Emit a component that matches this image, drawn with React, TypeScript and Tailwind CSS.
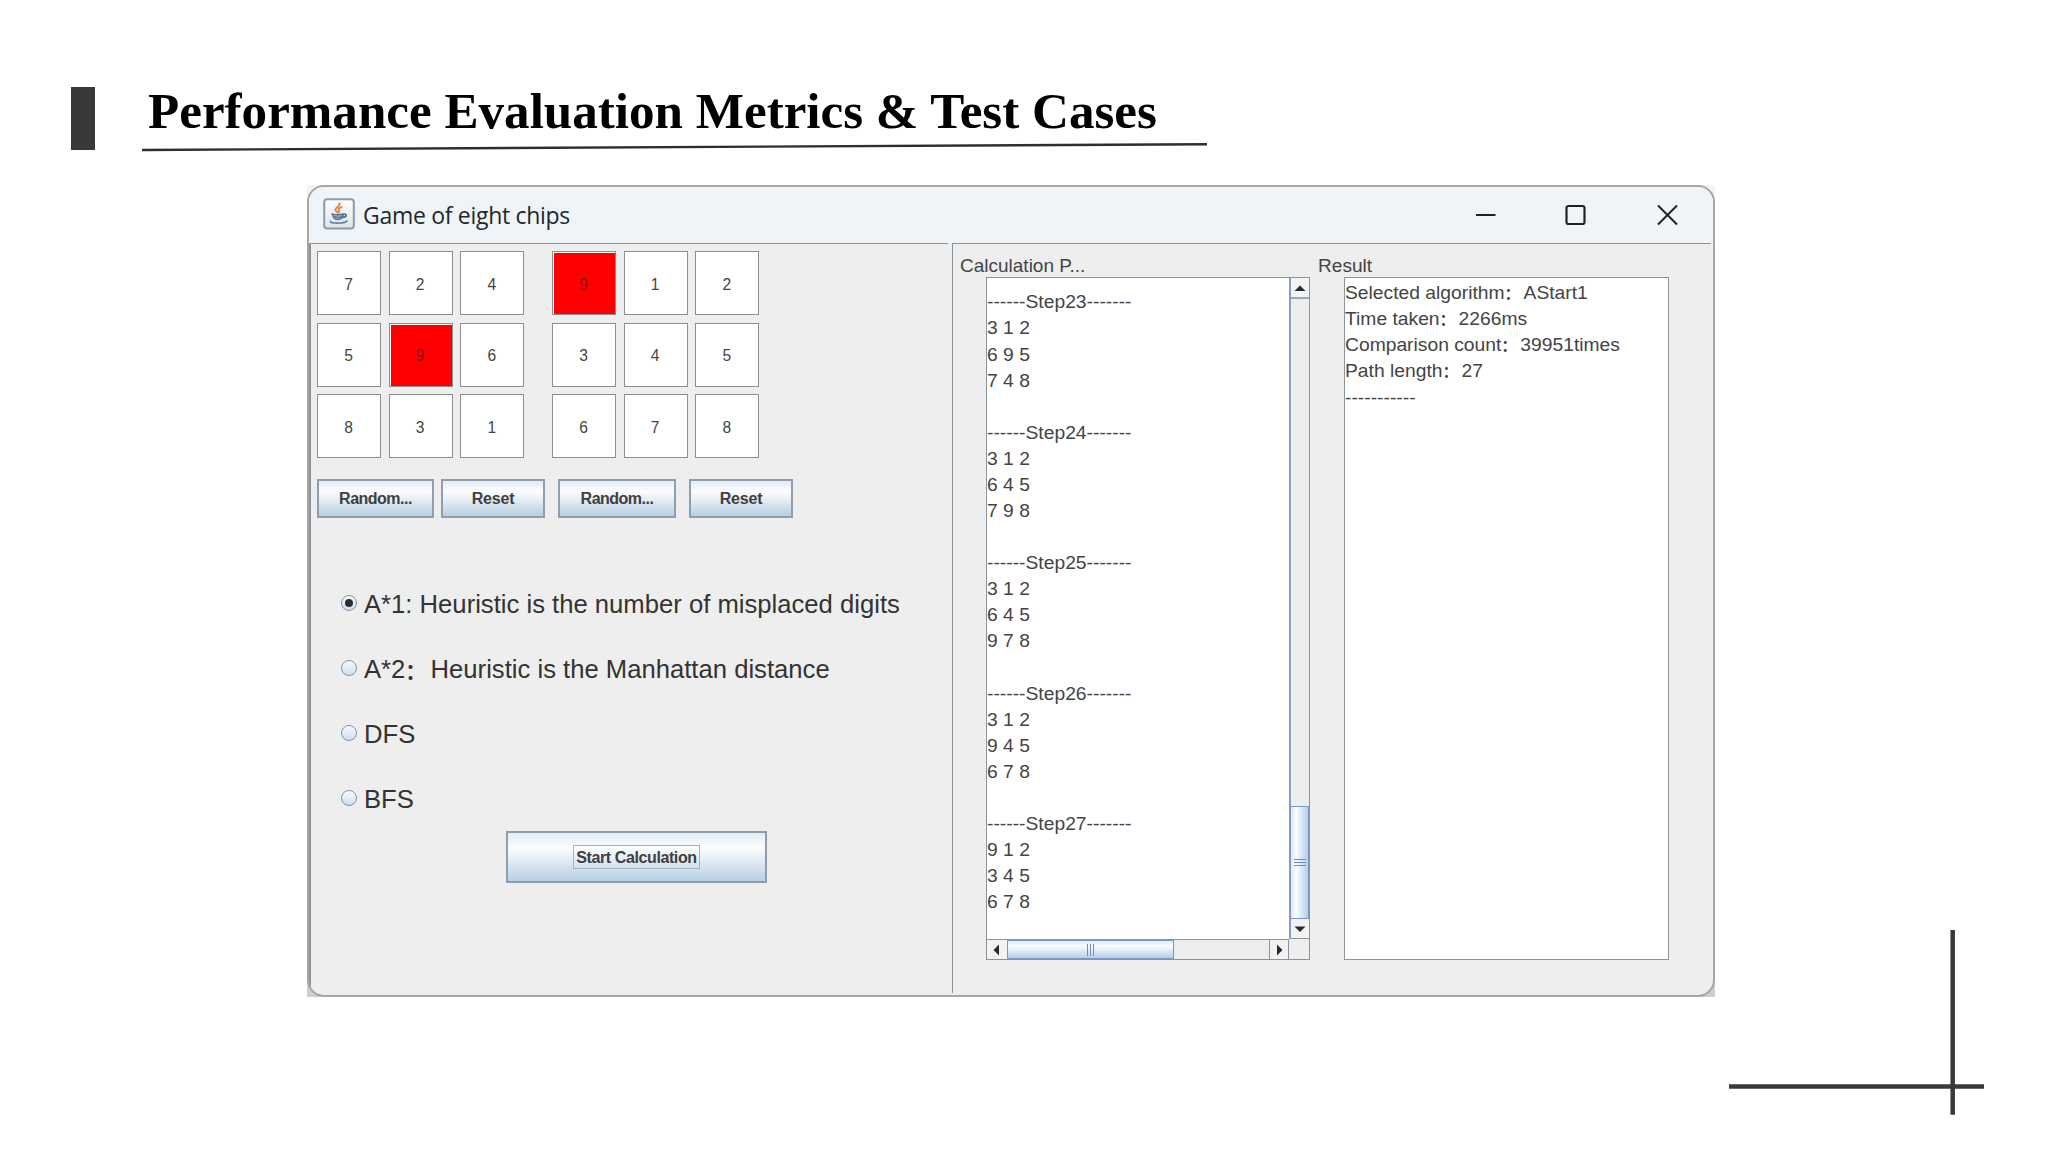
import { useState } from "react";

const startBoard = [7, 2, 4, 5, 9, 6, 8, 3, 1];
const goalBoard = [9, 1, 2, 3, 4, 5, 6, 7, 8];

const algorithms = [
  { id: "astar1", label: "A*1: Heuristic is the number of misplaced digits" },
  { id: "astar2", label: "A*2：Heuristic is the Manhattan distance" },
  { id: "dfs", label: "DFS" },
  { id: "bfs", label: "BFS" },
];

const steps = [
  { step: 23, rows: ["3 1 2", "6 9 5", "7 4 8"] },
  { step: 24, rows: ["3 1 2", "6 4 5", "7 9 8"] },
  { step: 25, rows: ["3 1 2", "6 4 5", "9 7 8"] },
  { step: 26, rows: ["3 1 2", "9 4 5", "6 7 8"] },
  { step: 27, rows: ["9 1 2", "3 4 5", "6 7 8"] },
];

const results = [
  "Selected algorithm：AStart1",
  "Time taken：2266ms",
  "Comparison count：39951times",
  "Path length：27",
  "-----------",
];

// The full-width colon sits lower and smaller than the Latin text around it
function Label({ text }: { text: string }) {
  const [name, value] = text.split("：");
  if (value === undefined) return <>{name}</>;
  return (
    <>
      {name}
      <span className="mr-[0.2em] align-[-0.5px] text-[0.82em] leading-none font-bold">：</span>
      {value}
    </>
  );
}

function Board({ cells }: { cells: number[] }) {
  return (
    <div className="grid grid-cols-[repeat(3,64px)] gap-[7.7px]">
      {cells.map((n) => (
        <div key={n} className="h-16 border border-[#8a8f93] bg-white pl-px pt-px">
          <div
            className={`flex h-full items-center justify-center pt-[2px] pr-[2px] text-[15.6px] ${
              n === 9 ? "bg-[#fe0000] text-[#851212]" : "text-[#444]"
            }`}
          >
            {n}
          </div>
        </div>
      ))}
    </div>
  );
}

function SwingButton({ label, className }: { label: string; className: string }) {
  return (
    <button
      className={`flex items-center justify-center border-2 border-[#8e9eae] bg-linear-to-b from-[#e3ebf4] via-[#fcfdfe] via-30% to-[#b9cfe4] pt-[2px] text-[16px] font-bold text-[#3d3f42] ${className}`}
    >
      {label}
    </button>
  );
}

function JavaIcon() {
  return (
    <svg width="32" height="32" viewBox="0 0 32 32" fill="none" strokeLinecap="round">
      <defs>
        <linearGradient id="tile" x1="0" y1="0" x2="0" y2="1">
          <stop offset="0" stopColor="#fdfdfd" />
          <stop offset="1" stopColor="#dfe3e8" />
        </linearGradient>
      </defs>
      <rect x="1.2" y="1.2" width="29.6" height="29.2" rx="3" fill="url(#tile)" stroke="#8b9bac" strokeWidth="2" />
      <path d="M16.5 5.500c1.500 2.800-4.600 3.800-4.100 6.300.2 1.200 1.700 1.800 2.300 2.900M18.800 9.200c-2.900.9-3.800 2-2.800 3.200.7.800.5 1.400-.3 2.200" stroke="#e8833a" strokeWidth="1.900" />
      <path d="M9 16c3 .9 8.700.9 11.500.1M9.800 16.500c.4 4 2 4.800 5 4.800s4.700-.8 5.200-4.800M20.500 16.300c4-.7 3.400 2.900-.8 3" stroke="#4f7397" strokeWidth="1.700" />
      <path d="M11.500 18.700c2.500.6 4.600.6 7 0" stroke="#4f7397" strokeWidth="1.500" />
      <path d="M7.500 23.300c-1 2.500 13.500 2.500 16.500-.2" stroke="#5d81a5" strokeWidth="1.700" />
    </svg>
  );
}

function Arrow({ d }: { d: string }) {
  return (
    <svg width="12" height="12" viewBox="0 0 12 12">
      <path d={d} fill="#2b2b2b" />
    </svg>
  );
}

function TitleBar() {
  return (
    <div className="flex h-14 shrink-0 items-center bg-[#eff4f9] pl-[14px] pr-[34px]">
      <div className="mb-[3px]">
        <JavaIcon />
      </div>
      <span className="ml-2 font-['Open_Sans',sans-serif] text-[23px] leading-8 tracking-[-0.3px] whitespace-nowrap text-[#24272b]">
        Game of eight chips
      </span>
      <svg className="mb-px ml-auto" width="204" height="22" viewBox="0 0 204 22" fill="none" stroke="#1f2226">
        <path d="M1 11h19.500" strokeWidth="1.800" />
        <rect x="91.500" y="2" width="18" height="18" rx="2" strokeWidth="2.200" />
        <path d="M183 1.500l19 19M202 1.500l-19 19" strokeWidth="2" />
      </svg>
    </div>
  );
}

function ControlPanel() {
  const [selected, setSelected] = useState("astar1");

  return (
    <div className="w-[639px] border-l-2 border-t border-[#8d939b] pl-1.5 pt-[7px]">
      <div className="flex gap-[27.6px]">
        <Board cells={startBoard} />
        <Board cells={goalBoard} />
      </div>

      <div className="mt-[20.6px] flex h-[39px]">
        <SwingButton label="Random..." className="w-[117px] tracking-[-0.5px]" />
        <SwingButton label="Reset" className="ml-[7px] w-[104px] tracking-[-0.2px]" />
        <SwingButton label="Random..." className="ml-[13px] w-[118px] tracking-[-0.5px]" />
        <SwingButton label="Reset" className="ml-[13px] w-[104px] tracking-[-0.2px]" />
      </div>

      <div className="mt-[53px] pl-6">
        {algorithms.map((a) => (
          <button key={a.id} onClick={() => setSelected(a.id)} className="flex h-[65px] items-center">
            <span className="flex size-4 items-center justify-center rounded-full border-[1.5px] border-[#8592a0] bg-linear-to-b from-[#f8fafc] to-[#cfdeed]">
              {selected === a.id && <span className="size-2 rounded-full bg-[#2b2f33]" />}
            </span>
            <span className="ml-[7px] pt-[2px] text-[25.65px] whitespace-nowrap text-[#333]">
              <Label text={a.label} />
            </span>
          </button>
        ))}
      </div>

      <button className="ml-[189px] flex h-[52px] w-[261px] items-center justify-center border-2 border-[#8e9eae] bg-linear-to-b from-[#e3ebf4] via-[#fcfdfe] via-30% to-[#b9cfe4] pt-px">
        <span className="border border-[#a3b3c6] px-0.5 pt-px text-[16px] leading-[21px] font-bold tracking-[-0.4px] whitespace-nowrap text-[#3d3f42]">
          Start Calculation
        </span>
      </button>
    </div>
  );
}

function StepsArea() {
  return (
    <div className="ml-[33px] grid h-[683px] w-[324px] grid-cols-[302px_1fr] grid-rows-[661px_1fr] border border-[#8d939b]">
      <div className="overflow-hidden bg-white pt-[11.4px] text-[19.27px] leading-[26.08px]">
        {steps.map((s) => (
          <div key={s.step} className="mb-[26.08px]">
            <p>------Step{s.step}-------</p>
            {s.rows.map((row) => (
              <p key={row}>{row}</p>
            ))}
          </div>
        ))}
      </div>

      <div className="flex flex-col border-l-2 border-[#8a9dc4]">
        <div className="flex h-[21px] items-center justify-center border-b-2 border-[#96abc2] bg-[#f3f4f5]">
          <Arrow d="M.5 9l5.500-5.500 5.500 5.500z" />
        </div>
        <div className="flex-1 bg-[#eceded]" />
        <div className="-ml-px flex h-[113px] flex-col items-center justify-center gap-[2px] border-[1.5px] border-[#7b98cc] bg-linear-to-r from-[#dfe9f3] via-[#fbfdfe] via-30% to-[#b5cee4]">
          <span className="h-px w-3 bg-[#6c8cc8]" />
          <span className="h-px w-3 bg-[#6c8cc8]" />
          <span className="h-px w-3 bg-[#6c8cc8]" />
        </div>
        <div className="flex h-5 items-center justify-center border-b border-[#8d939b] bg-[#f1f2f3]">
          <Arrow d="M.5 3.500h11l-5.500 5.500z" />
        </div>
      </div>

      <div className="flex border-t border-[#8d939b]">
        <div className="flex w-5 items-center justify-center bg-[#f1f2f3]">
          <Arrow d="M8 .5v11l-5.500-5.500z" />
        </div>
        <div className="flex w-[167px] items-center justify-center gap-[2px] border-[1.5px] border-[#7b98cc] bg-linear-to-b from-[#dfe9f3] via-[#fbfdfe] via-30% to-[#b5cee4]">
          <span className="h-3 w-px bg-[#6c8cc8]" />
          <span className="h-3 w-px bg-[#6c8cc8]" />
          <span className="h-3 w-px bg-[#6c8cc8]" />
        </div>
        <div className="flex-1 bg-[#eceeed]" />
        <div className="flex w-5 items-center justify-center border-x border-[#8d939b] bg-[#f1f2f3]">
          <Arrow d="M4 .5v11l5.500-5.500z" />
        </div>
      </div>
      <div className="bg-[#eee]" />
    </div>
  );
}

function OutputPanel() {
  return (
    <div className="ml-1 flex h-[750px] w-[759px] border-l border-t border-[#8d939b] text-[#444]">
      <section className="w-[364px]">
        <h2 className="h-[33px] pl-[7px] pt-2.5 text-[19px] leading-6">Calculation P...</h2>
        <StepsArea />
      </section>
      <section>
        <h2 className="h-[33px] pl-px pt-2.5 text-[19.1px] leading-6">Result</h2>
        <div className="ml-[27px] h-[683px] w-[325px] border border-[#8d939b] bg-white pt-[2.2px] text-[19.27px] leading-[26.08px] whitespace-nowrap">
          {results.map((line) => (
            <p key={line} className="h-[26.08px]">
              <Label text={line} />
            </p>
          ))}
        </div>
      </section>
    </div>
  );
}

export default function App() {
  return (
    <div className="h-[1152px] w-[2048px] overflow-hidden bg-white font-['Liberation_Sans','Noto_Sans_CJK_SC',sans-serif]">
      <header className="flex h-[185px] pl-[71px] pt-[87px]">
        <div className="h-[63px] w-6 bg-[#3b3838]" />
        <div className="ml-[47px]">
          <h1 className="pl-1.5 font-['Liberation_Serif',serif] text-[51.1px] leading-[48px] font-bold whitespace-nowrap text-black">
            Performance Evaluation Metrics &amp; Test Cases
          </h1>
          <svg className="mt-2" width="1065" height="9" viewBox="0 0 1065 9">
            <path d="M0 7L1065 1.200" stroke="#2f2d2d" strokeWidth="2.400" />
          </svg>
        </div>
      </header>

      <main className="flex pl-[307px]">
        <div className="h-[812px] w-[1408px] bg-linear-to-b from-[#f3f3f3] to-[#cfcfcf]">
          <div className="flex h-full flex-col overflow-hidden rounded-[17px] border-2 border-[#a6a8a8] bg-[#eee]">
            <TitleBar />
            <div className="flex flex-1">
              <ControlPanel />
              <OutputPanel />
            </div>
          </div>
        </div>

        {/* corner ornament */}
        <svg className="ml-[14px] mt-[745px]" width="256" height="185" viewBox="0 0 256 185" stroke="#3b3838" strokeWidth="4.500">
          <path d="M223.700 0v184.700M0 156.500h255" />
        </svg>
      </main>
    </div>
  );
}
